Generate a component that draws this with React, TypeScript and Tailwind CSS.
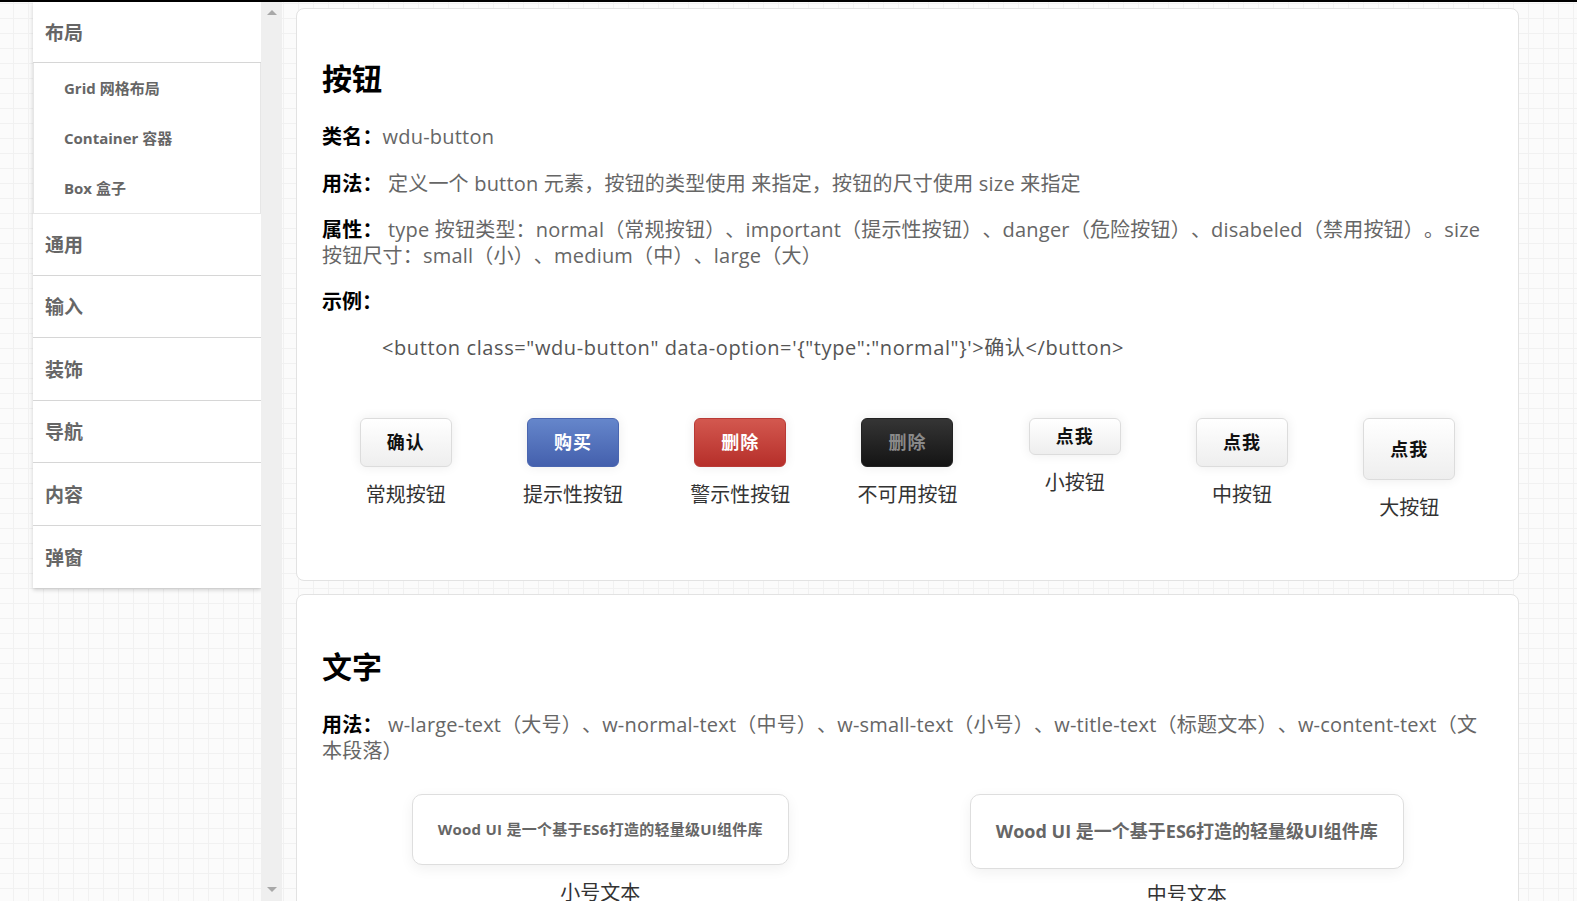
import React from "react";

const FONT = "font-['Open_Sans','Noto_Sans_CJK_SC',sans-serif]";

function SideHeader({ label, h }: { label: string; h: string }) {
  return (
    <div className={`${h} flex items-center pl-[12px] pt-[2px] text-[19px] font-bold text-[#666] border-b border-[#d6d6d6]`}>
      {label}
    </div>
  );
}

function SubItem({ label }: { label: string }) {
  return (
    <div className="h-[50px] flex items-center pl-[30px] text-[15px] font-bold text-[#666]">
      {label}
    </div>
  );
}

type Btn = {
  text: string;
  label: string;
  cls: string;
};

const WHITE = "text-[#111] border border-[#dcdcdc] bg-[linear-gradient(to_bottom,#ffffff,#eeeeee)]";

const buttons: Btn[] = [
  { text: "确认", label: "常规按钮", cls: `h-[49px] ${WHITE}` },
  {
    text: "购买",
    label: "提示性按钮",
    cls: "h-[49px] text-white border border-[#4a66b0] bg-[linear-gradient(to_bottom,#6586cb,#4460ad)]",
  },
  {
    text: "删除",
    label: "警示性按钮",
    cls: "h-[49px] text-white border border-[#b93a36] bg-[linear-gradient(to_bottom,#d3584f,#b62f2a)]",
  },
  {
    text: "删除",
    label: "不可用按钮",
    cls: "h-[49px] text-[#8a8a8a] border border-[#222] bg-[linear-gradient(to_bottom,#353535,#141414)]",
  },
  { text: "点我", label: "小按钮", cls: `h-[37px] ${WHITE}` },
  { text: "点我", label: "中按钮", cls: `h-[49px] ${WHITE}` },
  { text: "点我", label: "大按钮", cls: `h-[62px] ${WHITE}` },
];

export default function App() {
  return (
    <div
      className={`${FONT} [text-spacing-trim:space-all] h-[901px] w-full overflow-hidden flex flex-col bg-[#fbfbfb] bg-[linear-gradient(to_right,#f1f1f1_1px,transparent_1px),linear-gradient(to_bottom,#f1f1f1_1px,transparent_1px)] bg-[size:15px_15px] bg-[position:13px_3px]`}
    >
      <div className="h-[2px] w-full bg-black shrink-0" />
      <div className="flex flex-1 min-h-0 pl-[33px]">
        {/* Sidebar */}
        <div className="flex h-full shrink-0">
          <div className="w-[228px] self-start bg-white shadow-[0_2px_4px_rgba(0,0,0,0.18)]">
            <div className="h-[61px] flex items-center pl-[12px] pt-[3px] text-[19px] font-bold text-[#666] border-b border-[#d6d6d6]">
              布局
            </div>
            <div className="border-x border-b border-[#e6e6e6]">
              <SubItem label="Grid 网格布局" />
              <SubItem label="Container 容器" />
              <SubItem label="Box 盒子" />
            </div>
            <SideHeader label="通用" h="h-[62px]" />
            <SideHeader label="输入" h="h-[62px]" />
            <SideHeader label="装饰" h="h-[63px]" />
            <SideHeader label="导航" h="h-[62px]" />
            <SideHeader label="内容" h="h-[63px]" />
            <div className="h-[62px] flex items-center pl-[12px] pt-[2px] text-[19px] font-bold text-[#666]">
              弹窗
            </div>
          </div>
          <div className="w-[21px] h-full bg-[#efefef] flex flex-col justify-between items-center pt-[8px] pb-[9px]">
            <div className="w-0 h-0 border-x-[5px] border-x-transparent border-b-[5px] border-b-[#a8a8a8]" />
            <div className="w-0 h-0 border-x-[5px] border-x-transparent border-t-[5px] border-t-[#a8a8a8]" />
          </div>
        </div>

        {/* Main */}
        <div className="ml-[14px] w-[1223px] shrink-0 pt-[6px] flex flex-col">
          {/* Card 1 */}
          <div className="rounded-[8px] border border-[#e2e2e2] bg-white px-[25px] pt-[50px] pb-[59px]">
            <h2 className="text-[30px] leading-[40px] font-bold text-black">按钮</h2>
            <p className="mt-[25px] text-[20px] leading-[26px] tracking-[0.2px] text-[#666]">
              <b className="text-black">类名：</b>wdu-button
            </p>
            <p className="mt-[21px] text-[20px] leading-[26px] tracking-[0.2px] text-[#666]">
              <b className="text-black">用法：</b> 定义一个 button 元素，按钮的类型使用 来指定，按钮的尺寸使用 size 来指定
            </p>
            <p className="mt-[20px] text-[20px] leading-[26px] tracking-[0.2px] text-[#666]">
              <b className="text-black">属性：</b> type 按钮类型：normal（常规按钮）、important（提示性按钮）、danger（危险按钮）、disabeled（禁用按钮）。size
              按钮尺寸：small（小）、medium（中）、large（大）
            </p>
            <p className="mt-[20px] text-[20px] leading-[26px] text-[#666]">
              <b className="text-black">示例：</b>
            </p>
            <p className="mt-[20px] pl-[60px] text-[20px] leading-[26px] text-[#555] tracking-[0.6px]">
              {`<button class="wdu-button" data-option='{"type":"normal"}'>确认</button>`}
            </p>
            <div className="mt-[57px] grid grid-cols-7 items-start">
              {buttons.map((b, i) => (
                <div key={i} className="flex flex-col items-center">
                  <div
                    className={`w-[92px] rounded-[6px] flex items-center justify-center text-[18px] tracking-[1px] font-bold shadow-[0_0_12px_rgba(0,0,0,0.08)] ${b.cls}`}
                  >
                    {b.text}
                  </div>
                  <div className="mt-[15px] text-[20px] leading-[26px] text-[#333]">{b.label}</div>
                </div>
              ))}
            </div>
          </div>

          {/* Card 2 */}
          <div className="mt-[13px] rounded-[8px] border border-[#e2e2e2] bg-white px-[25px] pt-[52px] pb-[60px]">
            <h2 className="text-[30px] leading-[40px] font-bold text-black">文字</h2>
            <p className="mt-[25px] text-[20px] leading-[26px] tracking-[0.2px] text-[#666]">
              <b className="text-black">用法：</b> w-large-text（大号）、w-normal-text（中号）、w-small-text（小号）、w-title-text（标题文本）、w-content-text（文本段落）
            </p>
            <div className="mt-[30px] -ml-[15px] w-[1173px] grid grid-cols-2 items-start">
              <div className="flex flex-col items-center">
                <div className="rounded-[10px] border border-[#dedede] bg-white px-[25px] py-[24px] text-[15px] leading-[21px] tracking-[0.25px] font-bold text-[#666] shadow-[0_4px_14px_rgba(0,0,0,0.06)]">
                  Wood UI 是一个基于ES6打造的轻量级UI组件库
                </div>
                <div className="mt-[15px] text-[20px] leading-[26px] text-[#333]">小号文本</div>
              </div>
              <div className="flex flex-col items-center">
                <div className="rounded-[10px] border border-[#dedede] bg-white px-[25px] py-[24px] text-[18px] leading-[25px] font-bold text-[#666] shadow-[0_4px_14px_rgba(0,0,0,0.06)]">
                  Wood UI 是一个基于ES6打造的轻量级UI组件库
                </div>
                <div className="mt-[13px] text-[20px] leading-[26px] text-[#333]">中号文本</div>
              </div>
            </div>
          </div>
        </div>
      </div>
    </div>
  );
}
